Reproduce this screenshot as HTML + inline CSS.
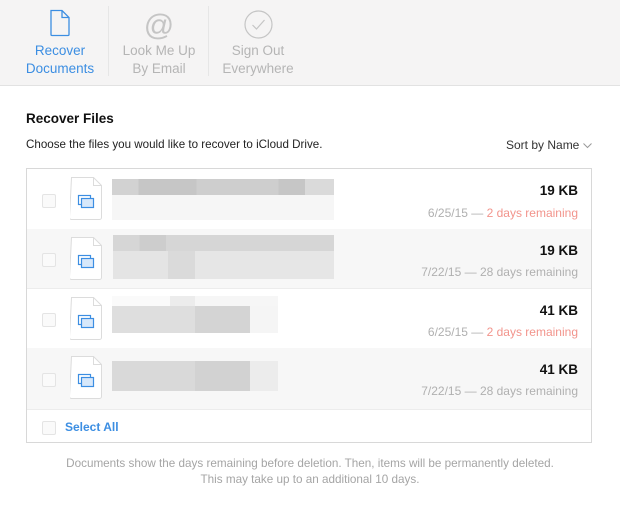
<html><head><style>
body{margin:0;width:620px;height:512px;background:#fff;font-family:"Liberation Sans",sans-serif;position:relative;overflow:hidden}
.hd{position:absolute;left:0;top:0;width:620px;height:85px;background:#f5f4f4;border-bottom:1px solid #e2e2e2}
.tab{position:absolute;top:42px;width:100px;text-align:center;font-size:13.5px;line-height:18px;color:#b5b5b5}
.sep{position:absolute;top:6px;width:1px;height:70px;background:#e6e6e6}
.a{position:absolute}
.tbl{position:absolute;left:26px;top:168px;width:564px;height:273px;border:1px solid #d8d8d8}
.row{position:absolute;left:0;width:564px;height:59px;border-bottom:1px solid #ececec}
.cb{position:absolute;left:15px;width:12px;height:12px;border:1px solid #e4e4e4;border-radius:2px;background:#fafafa}
.doc{position:absolute;left:43px;width:33px;height:45px}
.kb{position:absolute;right:13px;font-size:13.5px;font-weight:bold;color:#111}
.dt{position:absolute;right:13px;font-size:12px;color:#b0b0b0}
.red{color:#f2948c}
.bl{position:absolute}
</style></head><body>
<div class="hd">
<svg class="a" style="left:49px;top:9px" width="22" height="28" viewBox="0 0 22 28"><path d="M2 1.5h11l7 7v17a1 1 0 0 1-1 1H3a1 1 0 0 1-1-1z" fill="none" stroke="#3c8ee2" stroke-width="1.3"/><path d="M13 1.5v7h7" fill="none" stroke="#3c8ee2" stroke-width="1.3"/></svg>
<div class="tab" style="left:10px;color:#3c8ee2">Recover<br>Documents</div>
<div class="sep" style="left:108px"></div>
<svg class="a" style="left:144px;top:10px" width="30" height="30" viewBox="0 0 30 30"><text x="15" y="25" text-anchor="middle" font-family="Liberation Sans" font-size="30" fill="#c5c5c5">@</text></svg>
<div class="tab" style="left:109px">Look Me Up<br>By Email</div>
<div class="sep" style="left:208px"></div>
<svg class="a" style="left:244px;top:10px" width="29" height="29" viewBox="0 0 29 29"><circle cx="14.5" cy="14.5" r="13.5" fill="none" stroke="#c5c5c5" stroke-width="1.2"/><path d="M8.5 15l4 4 8-9" fill="none" stroke="#c5c5c5" stroke-width="1.2"/></svg>
<div class="tab" style="left:208px">Sign Out<br>Everywhere</div>
</div>
<div class="a" style="left:26px;top:111px;font-size:13.5px;font-weight:bold;color:#111">Recover Files</div>
<div class="a" style="left:26px;top:138px;font-size:11.6px;color:#222">Choose the files you would like to recover to iCloud Drive.</div>
<div class="a" style="left:506px;top:138px;font-size:12px;color:#333">Sort by Name <svg width="9" height="6" viewBox="0 0 9 6"><path d="M.5.5l4 4 4-4" fill="none" stroke="#999"/></svg></div>
<div class="tbl">
<div class="row" style="top:0;height:60px;background:#fff">
<div class="cb" style="top:25px"></div>
<svg class="doc" style="top:7px" viewBox="0 0 33 45"><path d="M1.5 1.5h22l8 8v32a2 2 0 0 1-2 2h-28a2 2 0 0 1-2-2z" fill="#fff" stroke="#dcdcdc"/><path d="M23.5 1.5v8h8" fill="none" stroke="#dcdcdc"/><rect x="8.5" y="19.5" width="12" height="9" fill="none" stroke="#3c8ee2" stroke-width="1.2"/><rect x="11.5" y="22.5" width="12" height="9" fill="#d7e8fa" stroke="#3c8ee2" stroke-width="1.2"/></svg>
<div class="bl" style="left:85px;top:10px;width:222px;height:16px;background:linear-gradient(90deg,#d2d2d2 0 12%,#c6c6c6 12% 38%,#cecece 38% 75%,#c6c6c6 75% 87%,#dadada 87%)"></div>
<div class="bl" style="left:85px;top:26px;width:222px;height:25px;background:#f6f6f6"></div>
<div class="kb" style="top:14px">19 KB</div><div class="dt" style="top:37px">6/25/15 — <span class="red">2 days remaining</span></div>
</div>
<div class="row" style="top:60px;background:#f7f7f7">
<div class="cb" style="top:24px"></div>
<svg class="doc" style="top:7px" viewBox="0 0 33 45"><path d="M1.5 1.5h22l8 8v32a2 2 0 0 1-2 2h-28a2 2 0 0 1-2-2z" fill="#fff" stroke="#dcdcdc"/><path d="M23.5 1.5v8h8" fill="none" stroke="#dcdcdc"/><rect x="8.5" y="19.5" width="12" height="9" fill="none" stroke="#3c8ee2" stroke-width="1.2"/><rect x="11.5" y="22.5" width="12" height="9" fill="#d7e8fa" stroke="#3c8ee2" stroke-width="1.2"/></svg>
<div class="bl" style="left:86px;top:6px;width:221px;height:16px;background:linear-gradient(90deg,#d6d6d6 0 12%,#cdcdcd 12% 24%,#d6d6d6 24%)"></div>
<div class="bl" style="left:86px;top:22px;width:221px;height:28px;background:linear-gradient(90deg,#e4e4e4 0 25%,#dadada 25% 37%,#e6e6e6 37%)"></div>
<div class="kb" style="top:14px">19 KB</div><div class="dt" style="top:36px">7/22/15 — 28 days remaining</div>
</div>
<div class="row" style="top:120px;background:#fff">
<div class="cb" style="top:24px"></div>
<svg class="doc" style="top:7px" viewBox="0 0 33 45"><path d="M1.5 1.5h22l8 8v32a2 2 0 0 1-2 2h-28a2 2 0 0 1-2-2z" fill="#fff" stroke="#dcdcdc"/><path d="M23.5 1.5v8h8" fill="none" stroke="#dcdcdc"/><rect x="8.5" y="19.5" width="12" height="9" fill="none" stroke="#3c8ee2" stroke-width="1.2"/><rect x="11.5" y="22.5" width="12" height="9" fill="#d7e8fa" stroke="#3c8ee2" stroke-width="1.2"/></svg>
<div class="bl" style="left:85px;top:7px;width:166px;height:12px;background:linear-gradient(90deg,#fafafa 0 35%,#ececec 35% 50%,#f6f6f6 50%)"></div>
<div class="bl" style="left:85px;top:17px;width:166px;height:27px;background:linear-gradient(90deg,#dedede 0 50%,#d4d4d4 50% 83%,#f5f5f5 83%)"></div>
<div class="kb" style="top:14px">41 KB</div><div class="dt" style="top:36px">6/25/15 — <span class="red">2 days remaining</span></div>
</div>
<div class="row" style="top:179px;height:61px;background:#f7f7f7">
<div class="cb" style="top:25px"></div>
<svg class="doc" style="top:7px" viewBox="0 0 33 45"><path d="M1.5 1.5h22l8 8v32a2 2 0 0 1-2 2h-28a2 2 0 0 1-2-2z" fill="#fff" stroke="#dcdcdc"/><path d="M23.5 1.5v8h8" fill="none" stroke="#dcdcdc"/><rect x="8.5" y="19.5" width="12" height="9" fill="none" stroke="#3c8ee2" stroke-width="1.2"/><rect x="11.5" y="22.5" width="12" height="9" fill="#d7e8fa" stroke="#3c8ee2" stroke-width="1.2"/></svg>
<div class="bl" style="left:85px;top:13px;width:166px;height:30px;background:linear-gradient(90deg,#d9d9d9 0 50%,#d2d2d2 50% 83%,#ececec 83%)"></div>
<div class="kb" style="top:14px">41 KB</div><div class="dt" style="top:36px">7/22/15 — 28 days remaining</div>
</div>
<div class="cb" style="top:252px"></div>
<div class="a" style="left:38px;top:251px;font-size:12px;font-weight:bold;color:#3c8ee2">Select All</div>
</div>
<div class="a" style="left:0;top:456px;width:620px;text-align:center;font-size:11.7px;line-height:16px;color:#a5a5a5">Documents show the days remaining before deletion. Then, items will be permanently deleted.<br>This may take up to an additional 10 days.</div>
</body></html>
